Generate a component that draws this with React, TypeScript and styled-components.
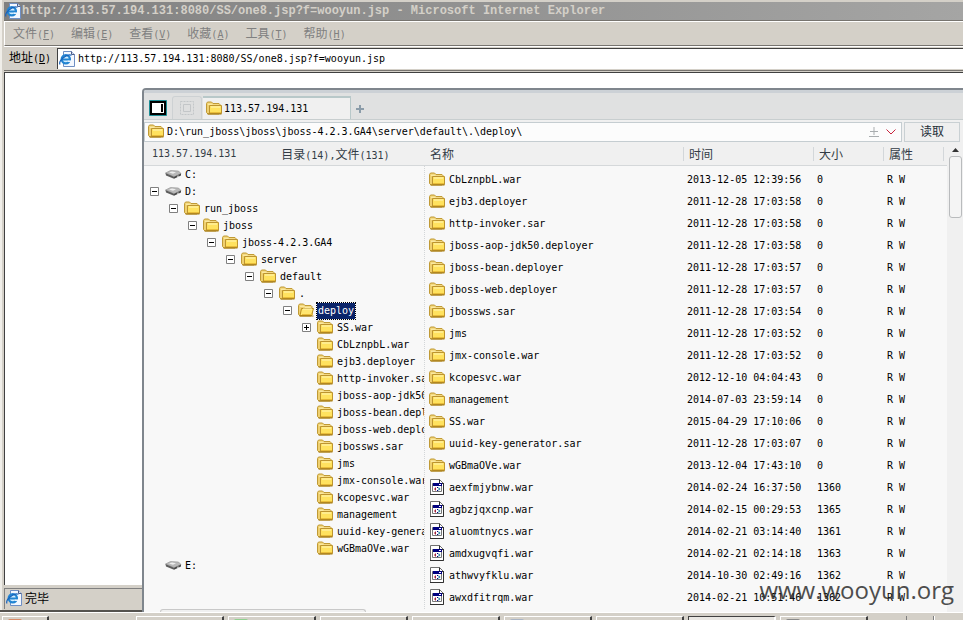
import React, { useState } from "react";
import styled, { createGlobalStyle } from "styled-components";

const MONO = '"DejaVu Sans Mono", "Liberation Mono", "Noto Sans CJK SC", monospace';
const CJK = '"Noto Sans CJK SC", sans-serif';

const GlobalStyle = createGlobalStyle`
  * { box-sizing: border-box; }
  body { margin: 0; background: #d4d0c8; color: #000; font: 10px/16px ${MONO}; }
  button, input, textarea { margin: 0; padding: 0; border: 0; background: none; color: inherit; font: inherit; }
  svg { display: block; flex: none; overflow: visible; }
`;

const Desktop = styled.div`
  height: 100vh;
  display: flex;
  flex-direction: column;
  overflow: hidden;
`;
const Workspace = styled.div`
  position: relative;
  flex: 1;
  min-height: 0;
  display: flex;
  border-bottom: 1px solid #fff;
`;
const Browser = styled.section`
  flex: 1;
  min-width: 0;
  display: flex;
  flex-direction: column;
  padding: 2px 0 1px 4px;
  border-bottom: 2px solid #55534f;
  background: #d4d0c8;
  box-shadow: inset 2px 0 0 #f0eee9;
`;
const TitleBar = styled.header`
  display: flex;
  align-items: center;
  gap: 1px;
  height: 19px;
  padding-left: 1px;
  background: linear-gradient(90deg, #808080, #a5a5a4);
  border-bottom: 1px solid #77746f;
  color: #d4d0c8;
  font: bold 12px/18px "Liberation Mono", monospace;
  white-space: nowrap;
`;
const Cjk = styled.span`
  font-family: ${CJK};
  font-size: 12px;
`;
const MenuBar = styled.nav`
  display: flex;
  align-items: center;
  gap: 16px;
  height: 25px;
  padding-left: 8px;
  border-top: 1px solid #fff;
  border-left: 1px solid #fff;
  border-bottom: 1px solid #77746f;
  color: #808080;
`;
const MenuButton = styled.button`
  white-space: nowrap;
`;
const AddressBar = styled.div`
  display: flex;
  height: 25px;
  padding-left: 5px;
  border-top: 1px solid #fff;
  border-bottom: 1px solid #77746f;
`;
const AddressLabel = styled.label`
  width: 48px;
  line-height: 20px;
  white-space: nowrap;
`;
const AddressField = styled.div`
  flex: 1;
  display: flex;
  align-items: center;
  gap: 3px;
  height: 21px;
  margin-top: 1px;
  padding-left: 1px;
  border-top: 1px solid #404040;
  border-left: 1px solid #404040;
  background: #fff;
`;
const TextInput = styled.input`
  flex: 1;
  min-width: 0;
  height: 18px;
  line-height: 18px;
  outline: 0;
`;
const PathInput = styled.textarea`
  flex: 1;
  min-width: 0;
  height: 18px;
  line-height: 18px;
  outline: 0;
  resize: none;
  overflow: hidden;
  white-space: pre;
`;
const Page = styled.div`
  flex: 1;
  margin-top: 1px;
  border-top: 1px solid #404040;
  border-left: 1px solid #404040;
  background: #fff;
`;
const StatusBar = styled.footer`
  display: flex;
  align-items: center;
  gap: 3px;
  height: 21px;
  margin-top: 3px;
  padding: 0 0 2px 1px;
  border-top: 1px solid #808080;
  border-left: 1px solid #808080;
`;

const Manager = styled.main`
  position: absolute;
  inset: 88px 0 0 142px;
  display: flex;
  flex-direction: column;
  border: solid #7f868d;
  border-width: 2px 0 0 2px;
  border-radius: 4px 0 0 0;
  background: #f0f0f0;
  overflow: hidden;
`;
const TabStrip = styled.div`
  display: flex;
  align-items: flex-end;
  height: 30px;
  border-top: 3px solid #ccd1d6;
  border-bottom: 1px solid #c8cecf;
  background: #e0e1e1;
`;
const HomeButton = styled.button`
  width: 28px;
  height: 24px;
  padding: 2px 0 0 5px;
`;
const GhostTab = styled.button`
  width: 30px;
  height: 23px;
  margin-right: 1px;
  border: 1px solid #cdd1d3;
  border-bottom: 0;
  border-radius: 3px 3px 0 0;
  background: #dedfdf;
  display: grid;
  place-items: center;
`;
const Tab = styled.button`
  display: flex;
  align-items: center;
  gap: 2px;
  width: 148px;
  height: 23px;
  padding-left: 3px;
  border: solid #b8c8c9;
  border-width: 2px 1px 0 0;
  background: #f0f0f0;
`;
const AddTab = styled.button`
  padding: 0 5px 6px;
`;
const PathForm = styled.form`
  display: flex;
  gap: 2px;
  height: 20px;
  margin: 2px 3px 2px 0;
`;
const PathField = styled.div`
  flex: 1;
  display: flex;
  align-items: center;
  gap: 3px;
  padding: 0 3px;
  border: 1px solid #c5cdd1;
  background: #fcfcfc;
`;
const PathButton = styled.button`
  width: 14px;
  height: 16px;
  display: grid;
  place-items: center;
`;
const ReadButton = styled.button`
  width: 56px;
  border: 1px solid #c9d0d3;
  background: #efefef;
  color: #26303a;
  line-height: 16px;
`;
const Panes = styled.div`
  flex: 1;
  min-height: 0;
  display: grid;
  grid-template-columns: 281px minmax(0, 1fr) 16px;
`;
const Pane = styled.section`
  min-width: 0;
  overflow: hidden;
  display: flex;
  flex-direction: column;
  background: #f8f8f8;
`;
const PaneHeader = styled.div`
  flex: none;
  display: flex;
  gap: 45px;
  height: 22px;
  padding-left: 8px;
  border-bottom: 1px solid #d5d8da;
  background: #f0f0f0;
  color: #333c46;
  line-height: 20px;
  white-space: nowrap;
`;
const Tree = styled.ul`
  flex: 1;
  min-height: 0;
  overflow: hidden;
  margin: 0;
  padding: 0;
  list-style: none;
  border-right: 1px dotted #d3d6d8;
`;
const TreeRow = styled.li<{ $depth: number }>`
  display: flex;
  align-items: center;
  height: 17px;
  padding-left: ${(p) => 6 + p.$depth * 19}px;
  white-space: nowrap;
`;
const Toggle = styled.button`
  flex: none;
  width: 9px;
  height: 9px;
  margin-right: 6px;
`;
const ToggleGap = styled.span`
  flex: none;
  width: 15px;
`;
const TreeLabel = styled.button<{ $selected: boolean }>`
  margin-left: 3px;
  padding: 0 1px;
  height: 16px;
  line-height: 16px;
  background: ${(p) => (p.$selected ? "#0a246a" : "transparent")};
  color: ${(p) => (p.$selected ? "#fff" : "#000")};
  outline: ${(p) => (p.$selected ? "1px dotted #000" : "0")};
`;
const HorizontalThumb = styled.div`
  flex: none;
  width: 206px;
  height: 3px;
  margin-left: 16px;
  border: 1px solid #c9c9c9;
  border-bottom: 0;
  border-radius: 3px 3px 0 0;
  background: #f0f0f0;
`;
const FileTable = styled.table`
  width: 100%;
  table-layout: fixed;
  border-collapse: separate;
  border-spacing: 0;
`;
const HeadCell = styled.th<{ $width?: number }>`
  width: ${(p) => (p.$width ? `${p.$width}px` : "auto")};
  height: 22px;
  padding: 0 0 2px;
  border-bottom: 1px solid #d5d8da;
  background: #f0f0f0;
  color: #333c46;
  font-weight: normal;
  line-height: 14px;
  text-align: left;
`;
const HeadLabel = styled.span<{ $divided: boolean }>`
  display: block;
  height: 14px;
  padding-left: 5px;
  border-left: ${(p) => (p.$divided ? "1px solid #d3d7da" : "0")};
`;
const Spacer = styled.tbody`
  td { height: 3px; padding: 0; }
`;
const Cell = styled.td`
  height: 22px;
  padding: 0 0 0 4px;
  white-space: nowrap;
`;
const NameCell = styled.div`
  display: flex;
  align-items: center;
  gap: 4px;
`;
const ScrollTrack = styled.div`
  display: flex;
  flex-direction: column;
  align-items: center;
  padding-top: 4px;
  background: #f0f0f0;
`;
const ScrollThumb = styled.div`
  width: 13px;
  height: 62px;
  margin-top: 4px;
  border: 1px solid #b9bbbd;
  border-radius: 3px;
  background: #f4f4f4;
`;
const Watermark = styled.div`
  position: absolute;
  right: 9px;
  bottom: 4px;
  color: #303030;
  opacity: 0.85;
  font: 24px/36px "Open Sans", sans-serif;
  pointer-events: none;
`;
const Taskbar = styled.footer`
  flex: none;
  display: flex;
  gap: 4px;
  height: 7px;
  padding: 3px 0 0 2px;
  background: #d4d0c8;
  overflow: hidden;
`;
const TaskButton = styled.button<{ $pressed?: boolean; $start?: boolean }>`
  flex: none;
  width: ${(p) => (p.$start ? 47 : 88)}px;
  height: 22px;
  margin-right: ${(p) => (p.$start ? 83 : 0)}px;
  padding: 2px 0 0 5px;
  border: 1px solid;
  border-color: ${(p) => (p.$pressed ? "#404040 #fff #fff #404040" : "#fff #404040 #404040 #fff")};
  border-right-width: 2px;
  background: ${(p) => (p.$pressed ? "#e9e7e3" : "#d4d0c8")};
  display: flex;
  align-items: flex-start;
`;
const TaskIcon = styled.span<{ $color: string }>`
  display: block;
  width: 14px;
  height: 14px;
  border-radius: 2px;
  background: ${(p) => p.$color};
`;
const Tray = styled.div`
  flex: 1;
  display: flex;
  height: 22px;
  margin-left: 34px;
  border-left: 1px solid #808080;
`;
const TrayDivider = styled.span`
  width: 2px;
  margin-left: 26px;
  border-left: 1px solid #808080;
  border-right: 1px solid #fff;
`;

function IeIcon() {
  return (
    <svg width="16" height="16" viewBox="0 0 16 16" aria-hidden="true">
      <path d="M4.5.5h8l3 3v12h-11z" fill="#f4f8ff" stroke="#6f8fc4" />
      <path d="M12.5.5v3h3" fill="#d4e0f4" stroke="#4f5f88" />
      <circle cx="6.8" cy="8.3" r="4.1" fill="#d5efff" stroke="#2385d2" strokeWidth="2.3" />
      <path d="M3 8.5h8.8" stroke="#2385d2" strokeWidth="2" />
      <path d="M8.8 10.2h3.6" stroke="#f4f8ff" strokeWidth="1.5" />
      <path d="M1 13.5C-.8 10.5 7 2.2 12.5 4.2" fill="none" stroke="#1863bd" strokeWidth="1.2" />
    </svg>
  );
}
function FolderIcon({ open = false }: { open?: boolean }) {
  return (
    <svg width="16" height="16" viewBox="0 1 16 16" aria-hidden="true">
      <path d="M.5 12.5v-9l1-1.5h4l1.5 1.5h6l1 1v8.5l-1 1h-11z" fill="#efd070" stroke="#c09a35" />
      <path d="M2 4.2h3.8l1 1h6" fill="none" stroke="#fff3b5" />
      {open ? (
        <path d="M3.5 6.5h12l-2 7H2z" fill="#ffe670" stroke="#b98d1c" />
      ) : (
        <path d="M3.5 5.5h12v8h-12z" fill="#ffe25f" stroke="#bd9430" />
      )}
      <path d="M5 7h9" stroke="#fff6bb" />
      <path d="M4 12.5h11" stroke="#e9bd39" />
      <path d="M1.5 14h14" stroke="#a47a12" />
    </svg>
  );
}
function DriveIcon() {
  return (
    <svg width="16" height="16" viewBox="0 1 16 16" aria-hidden="true">
      <path d="M.5 7 5.5 4.5l8 .5 2.5 2.5-6.5 3.2z" fill="#b9b9b9" stroke="#909090" strokeWidth=".6" />
      <path d="M.5 7 9 10.7v2.1L1 9.5z" fill="#5d5d5d" />
      <path d="M9 10.7 16 7.5v2l-7 3.3z" fill="#484848" />
      <path d="m4 6.5 3-1 4 .7-3 1.5z" fill="#eee" />
      <path d="M12 10.2h2" stroke="#ddd" />
    </svg>
  );
}
function FileIcon() {
  return (
    <svg width="16" height="16" viewBox="0 1 16 16" aria-hidden="true">
      <path d="M1.5.5h9l4 4v11h-13z" fill="#fff" stroke="#707070" />
      <path d="M10.5.5v4h4M14.5 4v11.5H1" fill="none" stroke="#303030" />
      <path d="M3.5 4.5h9v8h-9z" fill="#fff" stroke="#777" />
      <path d="M4 4h9v3H4z" fill="#000080" />
      <path d="M10 5.5h2" stroke="#fff" />
      <path d="M5 10l2-2v4z" fill="#a3203a" />
      <path d="M8 8h1v1H8zM8 11h1v1H8z" fill="#000080" />
      <path d="M11.5 10l-2-2v4z" fill="#257e9e" />
    </svg>
  );
}
function ToggleIcon({ plus = false }: { plus?: boolean }) {
  return (
    <svg width="9" height="9" viewBox="0 0 9 9" aria-hidden="true">
      <path d="M.5.5h8v8h-8z" fill="#fff" stroke="#808080" />
      <path d={plus ? "M2 4.5h5M4.5 2v5" : "M2 4.5h5"} stroke="#000" />
    </svg>
  );
}

const menus = [["文件", "F"], ["编辑", "E"], ["查看", "V"], ["收藏", "A"], ["工具", "T"], ["帮助", "H"]];

type Node = { name: string; depth: number; kind?: "drive" | "open"; toggle?: "plus" | "minus" };
const nodes: Node[] = [
  { name: "C:", depth: 0, kind: "drive" },
  { name: "D:", depth: 0, kind: "drive", toggle: "minus" },
  { name: "run_jboss", depth: 1, toggle: "minus" },
  { name: "jboss", depth: 2, toggle: "minus" },
  { name: "jboss-4.2.3.GA4", depth: 3, toggle: "minus" },
  { name: "server", depth: 4, toggle: "minus" },
  { name: "default", depth: 5, toggle: "minus" },
  { name: ".", depth: 6, toggle: "minus" },
  { name: "deploy", depth: 7, kind: "open", toggle: "minus" },
  { name: "SS.war", depth: 8, toggle: "plus" },
  ...["CbLznpbL.war", "ejb3.deployer", "http-invoker.sar", "jboss-aop-jdk50.deployer", "jboss-bean.deployer",
    "jboss-web.deployer", "jbossws.sar", "jms", "jmx-console.war", "kcopesvc.war", "management",
    "uuid-key-generator.sar", "wGBmaOVe.war"].map((name) => ({ name, depth: 8 })),
  { name: "E:", depth: 0, kind: "drive" },
];

const files: [string, string, string][] = [
  ["CbLznpbL.war", "2013-12-05 12:39:56", "0"],
  ["ejb3.deployer", "2011-12-28 17:03:58", "0"],
  ["http-invoker.sar", "2011-12-28 17:03:58", "0"],
  ["jboss-aop-jdk50.deployer", "2011-12-28 17:03:58", "0"],
  ["jboss-bean.deployer", "2011-12-28 17:03:57", "0"],
  ["jboss-web.deployer", "2011-12-28 17:03:57", "0"],
  ["jbossws.sar", "2011-12-28 17:03:54", "0"],
  ["jms", "2011-12-28 17:03:52", "0"],
  ["jmx-console.war", "2011-12-28 17:03:52", "0"],
  ["kcopesvc.war", "2012-12-10 04:04:43", "0"],
  ["management", "2014-07-03 23:59:14", "0"],
  ["SS.war", "2015-04-29 17:10:06", "0"],
  ["uuid-key-generator.sar", "2011-12-28 17:03:07", "0"],
  ["wGBmaOVe.war", "2013-12-04 17:43:10", "0"],
  ["aexfmjybnw.war", "2014-02-24 16:37:50", "1360"],
  ["agbzjqxcnp.war", "2014-02-15 00:29:53", "1365"],
  ["aluomtnycs.war", "2014-02-21 03:14:40", "1361"],
  ["amdxugvqfi.war", "2014-02-21 02:14:18", "1363"],
  ["athwvyfklu.war", "2014-10-30 02:49:16", "1362"],
  ["awxdfitrqm.war", "2014-02-21 10:51:46", "1362"],
];

const columns: [string, number | undefined][] = [["名称", undefined], ["时间", 130], ["大小", 70], ["属性", 60], ["", 4]];
const taskColors = ["transparent", "#8fd08f", "transparent", "transparent", "#a9b4c4", "transparent", "transparent", "#8a8a8a"];

export default function App() {
  const [selected, setSelected] = useState("deploy");
  return (
    <Desktop>
      <GlobalStyle />
      <Workspace>
        <Browser>
          <TitleBar>
            <IeIcon />
            <span>http://113.57.194.131:8080/SS/one8.jsp?f=wooyun.jsp - Microsoft Internet Explorer</span>
          </TitleBar>
          <MenuBar>
            {menus.map(([label, key]) => (
              <MenuButton key={key}><Cjk>{label}</Cjk>(<u>{key}</u>)</MenuButton>
            ))}
          </MenuBar>
          <AddressBar>
            <AddressLabel htmlFor="address"><Cjk>地址</Cjk>(<u>D</u>)</AddressLabel>
            <AddressField>
              <IeIcon />
              <TextInput id="address" defaultValue="http://113.57.194.131:8080/SS/one8.jsp?f=wooyun.jsp" />
            </AddressField>
          </AddressBar>
          <Page />
          <StatusBar><IeIcon /><Cjk>完毕</Cjk></StatusBar>
        </Browser>

        <Manager>
          <TabStrip>
            <HomeButton aria-label="Toggle panel">
              <svg width="18" height="16" viewBox="0 0 18 16" aria-hidden="true">
                <path d="M.5.5h17v15H.5z" fill="#1d8c94" stroke="#1d8c94" />
                <path d="M2 2h14v12H2z" fill="#fff" stroke="#000" strokeWidth="2" />
                <path d="M13 4v8" stroke="#000" strokeWidth="2" />
              </svg>
            </HomeButton>
            <GhostTab aria-label="Environment">
              <svg width="14" height="14" viewBox="0 0 14 14" aria-hidden="true" fill="none" stroke="#c3c6c8">
                <path d="M.5.5h13v13H.5z" strokeDasharray="2 1" />
                <path d="M3.5 3.5h7v7h-7z" />
              </svg>
            </GhostTab>
            <Tab><FolderIcon />113.57.194.131</Tab>
            <AddTab aria-label="New tab">
              <svg width="8" height="8" viewBox="0 0 8 8" aria-hidden="true">
                <path d="M4 0v8M0 4h8" stroke="#8b9ca9" strokeWidth="2" />
              </svg>
            </AddTab>
          </TabStrip>
          <PathForm onSubmit={(e) => e.preventDefault()}>
            <PathField>
              <FolderIcon />
              <PathInput
                rows={1}
                spellCheck={false}
                aria-label="Path"
                defaultValue={"D:\\run_jboss\\jboss\\jboss-4.2.3.GA4\\server\\default\\.\\deploy\\"}
              />
              <PathButton type="button" aria-label="Bookmark">
                <svg width="10" height="11" viewBox="0 0 10 11" aria-hidden="true">
                  <path d="M5 0v8M1 4.5h8M0 9.5h10" stroke="#a9adaf" />
                </svg>
              </PathButton>
              <PathButton type="button" aria-label="History">
                <svg width="10" height="6" viewBox="0 0 10 6" aria-hidden="true">
                  <path d="M.5.5 5 5 9.5.5" fill="none" stroke="#c8233c" />
                </svg>
              </PathButton>
            </PathField>
            <ReadButton type="submit"><Cjk>读取</Cjk></ReadButton>
          </PathForm>
          <Panes>
            <Pane>
              <PaneHeader>
                <span>113.57.194.131</span>
                <span><Cjk>目录</Cjk>(14),<Cjk>文件</Cjk>(131)</span>
              </PaneHeader>
              <Tree>
                {nodes.map((n) => (
                  <TreeRow key={n.name} $depth={n.depth}>
                    {n.toggle ? (
                      <Toggle aria-label={`Toggle ${n.name}`}><ToggleIcon plus={n.toggle === "plus"} /></Toggle>
                    ) : (
                      <ToggleGap />
                    )}
                    {n.kind === "drive" ? <DriveIcon /> : <FolderIcon open={n.kind === "open"} />}
                    <TreeLabel $selected={selected === n.name} onClick={() => setSelected(n.name)}>{n.name}</TreeLabel>
                  </TreeRow>
                ))}
              </Tree>
              <HorizontalThumb />
            </Pane>
            <Pane>
              <FileTable>
                <thead>
                  <tr>
                    {columns.map(([label, width], i) => (
                      <HeadCell key={i} $width={width}>
                        <HeadLabel $divided={i > 0}><Cjk>{label}</Cjk></HeadLabel>
                      </HeadCell>
                    ))}
                  </tr>
                </thead>
                <Spacer><tr><td colSpan={5} /></tr></Spacer>
                <tbody>
                  {files.map(([name, time, size]) => (
                    <tr key={name}>
                      <Cell><NameCell>{size === "0" ? <FolderIcon /> : <FileIcon />}{name}</NameCell></Cell>
                      <Cell>{time}</Cell>
                      <Cell>{size}</Cell>
                      <Cell colSpan={2}>R W</Cell>
                    </tr>
                  ))}
                </tbody>
              </FileTable>
            </Pane>
            <ScrollTrack>
              <svg width="7" height="4" viewBox="0 0 7 4" aria-hidden="true"><path d="M3.5 0 7 4H0z" fill="#333" /></svg>
              <ScrollThumb />
            </ScrollTrack>
          </Panes>
          <Watermark>www.wooyun.org</Watermark>
        </Manager>
      </Workspace>
      <Taskbar>
        <TaskButton $start aria-label="Start"><TaskIcon $color="#d98a66" /></TaskButton>
        {taskColors.map((color, i) => (
          <TaskButton key={i} $pressed={i === 6} aria-label={`Window ${i + 1}`}><TaskIcon $color={color} /></TaskButton>
        ))}
        <Tray><TrayDivider /></Tray>
      </Taskbar>
    </Desktop>
  );
}
